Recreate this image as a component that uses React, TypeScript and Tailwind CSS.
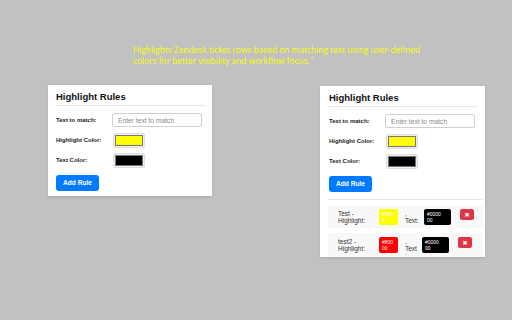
import React from "react";

interface Rule {
  text: string;
  bg: string;
  fg: string;
  sepClass: string;
}

const rules: Rule[] = [
  { text: "Test", bg: "#ffff00", fg: "#000000", sepClass: "w-[15px]" },
  { text: "test2", bg: "#ff0000", fg: "#000000", sepClass: "w-[13px] [overflow-wrap:anywhere]" },
];

const Swatch: React.FC<{ color: string }> = ({ color }) => (
  <div className="ml-[1px] w-[32px] h-[15px] rounded-[2px] bg-[#efefef] border border-[#dedede] p-[1px]">
    <div className="h-full w-full border border-[#767676]" style={{ backgroundColor: color }} />
  </div>
);

const RuleForm: React.FC = () => (
  <>
    <h3 className="pb-[2px] border-b border-[#e6e6e6] text-[9.5px] leading-[12px] font-bold text-[#111]">
      Highlight Rules
    </h3>
    <div className="mt-[7px] flex items-center h-[14px]">
      <label className="w-[56px] text-[6px] font-bold text-[#222]">Text to match:</label>
      <input
        type="text"
        placeholder="Enter text to match"
        className="w-[90px] h-[14px] px-[5px] border border-[#d0d0d0] rounded-[2px] text-[6.7px] placeholder:text-[#8a8a8a] outline-none"
      />
    </div>
    <div className="mt-[6px] flex items-center h-[15px]">
      <label className="w-[56px] text-[6px] font-bold text-[#222]">Highlight Color:</label>
      <Swatch color="#ffff00" />
    </div>
    <div className="mt-[5px] flex items-center h-[15px]">
      <label className="w-[56px] text-[6px] font-bold text-[#222]">Text Color:</label>
      <Swatch color="#000000" />
    </div>
    <button className="mt-[7px] w-[43px] h-[16px] rounded-[3px] bg-[#007bff] text-white text-[6.6px] font-bold flex items-center justify-center">
      Add Rule
    </button>
  </>
);

const Chip: React.FC<{ color: string; width: string; inner: string }> = ({ color, width, inner }) => (
  <div className={`${width} h-[16px] rounded-[2px] pl-[3px] pt-[2px] shrink-0`} style={{ backgroundColor: color }}>
    <span className={`block ${inner} text-[5px] leading-[6px] text-white break-all`}>{color}</span>
  </div>
);

export default function App() {
  return (
    <div className="w-[512px] h-[320px] overflow-hidden bg-[#c1c1c1] font-['Liberation_Sans',Arial,sans-serif]">
      {/* Description */}
      <p className="pt-[44px] pl-[133px] w-[440px] font-['Open_Sans',sans-serif] text-[8.4px] leading-[11px] text-[#ffff00]">
        Highlights Zendesk ticket rows based on matching text using user-defined colors for better visibility and workflow focus."
      </p>

      <div className="mt-[19px] flex items-start pl-[48px]">
        {/* Popup */}
        <div className="w-[164px] bg-white pl-[8px] pr-[6px] pt-[6px] pb-[5px] shadow-sm">
          <RuleForm />
        </div>

        {/* Popup with saved rules */}
        <div className="ml-[108px] mt-[1px] w-[165px] h-[171px] overflow-hidden bg-white pl-[9px] pr-[7px] pt-[6px] shadow-sm">
          <RuleForm />
          <div className="mt-[7px] border-t border-[#e6e6e6] pt-[5px] -ml-[1px] -mr-[5px] flex flex-col gap-[5px]">
            {rules.map((rule) => (
              <div key={rule.text} className="flex items-start bg-[#f8f8f8] pl-[10px] pt-[4px] pb-[3px] rounded-[2px]">
                <span className="mt-[1px] w-[36px] text-[6.5px] leading-[7px] text-[#333]">
                  {rule.text} - Highlight:
                </span>
                <div className="ml-[5px]">
                  <Chip color={rule.bg} width="w-[19px]" inner="w-[13px]" />
                </div>
                <span className={`mt-[1px] ml-[7px] ${rule.sepClass} text-[6.5px] leading-[7px] text-[#333]`}>
                  , Text:
                </span>
                <div className="ml-[4px]">
                  <Chip color={rule.fg} width="w-[27px]" inner="w-[15px]" />
                </div>
                <button className="ml-[9px] w-[14px] h-[11px] rounded-[2px] bg-[#dc3545] text-white text-[6px] font-['DejaVu_Sans',sans-serif] flex items-center justify-center">
                  ✖
                </button>
              </div>
            ))}
          </div>
        </div>
      </div>
    </div>
  );
}
